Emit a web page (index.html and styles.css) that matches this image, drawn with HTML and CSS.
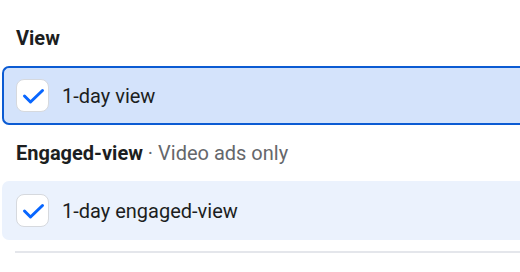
FILE: index.html
```html
<!DOCTYPE html>
<html lang="en">
<head>
    <meta charset="UTF-8">
    <title>Attribution window</title>
    <link rel="stylesheet" href="styles.css">
</head>
<body>
    <div class="panel">
        <h3 class="group-title">View</h3>
        <label class="option selected">
            <span class="check">
                <svg width="24" height="24" viewBox="0 0 24 24"><path d="M3.5 12 L9.5 18 L21.5 6.5" fill="none" stroke="#0866ff" stroke-width="3" stroke-linecap="round" stroke-linejoin="round"/></svg>
            </span>
            <span class="option-label">1-day view</span>
        </label>

        <h3 class="group-title">Engaged-view <span class="note">· Video ads only</span></h3>
        <label class="option">
            <span class="check">
                <svg width="24" height="24" viewBox="0 0 24 24"><path d="M3.5 12 L9.5 18 L21.5 6.5" fill="none" stroke="#0866ff" stroke-width="3" stroke-linecap="round" stroke-linejoin="round"/></svg>
            </span>
            <span class="option-label">1-day engaged-view</span>
        </label>

        <div class="divider"></div>
    </div>
</body>
</html>
```
FILE: styles.css
```css
body {
    margin: 0;
    padding: 0;
    background-color: #fff;
    font-family: Roboto, "Liberation Sans", sans-serif;
    color: #1c1e21;
}
.panel {
    padding: 26px 0 0 2px;
}
.group-title {
    margin: 0 0 16px 14px;
    font-size: 20px;
    line-height: 24px;
    font-weight: 700;
}
.note {
    font-weight: 400;
    color: #65676b;
}
.option {
    display: flex;
    align-items: center;
    gap: 13px;
    padding: 11px 12px;
    margin-bottom: 16px;
    border: 2px solid transparent;
    border-right-width: 0;
    border-radius: 7px 0 0 7px;
    background-color: #ebf2fd;
}
.option.selected {
    border-color: #0b5bd3;
    background-color: #d4e3fb;
}
.check {
    width: 31px;
    height: 31px;
    display: flex;
    align-items: center;
    justify-content: center;
    background-color: #fff;
    border: 1px solid #d6d9de;
    border-radius: 8px;
}
.option-label {
    font-size: 20px;
    line-height: 24px;
}
.divider {
    height: 2px;
    margin: -5px 0 0 13px;
    background-color: #e4e6eb;
}
```
